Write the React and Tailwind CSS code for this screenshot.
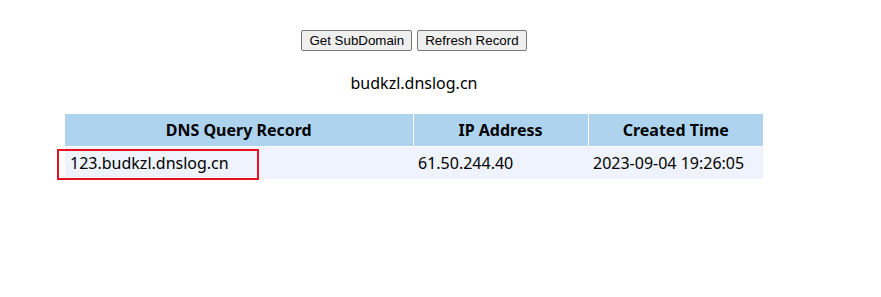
const rows = [
    { domain: "123.budkzl.dnslog.cn", ip: "61.50.244.40", time: "2023-09-04 19:26:05" },
];

const App = () => {
    return (
        <div className="w-[828px] bg-white pt-[30px] text-black" style={{ fontFamily: "'Noto Sans', sans-serif" }}>
            <div className="flex justify-center gap-[5px]">
                <button className="h-[21px] px-[7px] border border-[#767676] rounded-[2px] bg-[#efefef] text-[13.33px] leading-none font-['Liberation_Sans',Arial,sans-serif]">
                    Get SubDomain
                </button>
                <button className="h-[21px] px-[7px] border border-[#767676] rounded-[2px] bg-[#efefef] text-[13.33px] leading-none font-['Liberation_Sans',Arial,sans-serif]">
                    Refresh Record
                </button>
            </div>

            <p className="mt-[21px] text-center text-[16px] leading-[22px]">budkzl.dnslog.cn</p>

            <div className="flex justify-center mt-[20px]">
                <table className="w-[698px] border-collapse text-[16px]">
                    <thead>
                        <tr className="bg-[#aed3ee]">
                            <th className="w-[348px] h-[32px] font-bold text-center border-r border-b border-white">DNS Query Record</th>
                            <th className="w-[175px] h-[32px] font-bold text-center border-r border-b border-white">IP Address</th>
                            <th className="h-[32px] font-bold text-center border-b border-white">Created Time</th>
                        </tr>
                    </thead>
                    <tbody>
                        {rows.map((r) => (
                            <tr key={r.domain} className="bg-[#eef3fd]">
                                <td className="relative h-[33px] px-[5px] text-left">
                                    {r.domain}
                                    {/* highlight box */}
                                    <div className="absolute left-[-8px] top-[2px] w-[202px] h-[31px] border-2 border-[#e81123]" />
                                </td>
                                <td className="h-[33px] px-[5px] text-left">{r.ip}</td>
                                <td className="h-[33px] px-[5px] text-left">{r.time}</td>
                            </tr>
                        ))}
                    </tbody>
                </table>
            </div>
            <div className="h-[117px]" />
        </div>
    );
};

export default App;
